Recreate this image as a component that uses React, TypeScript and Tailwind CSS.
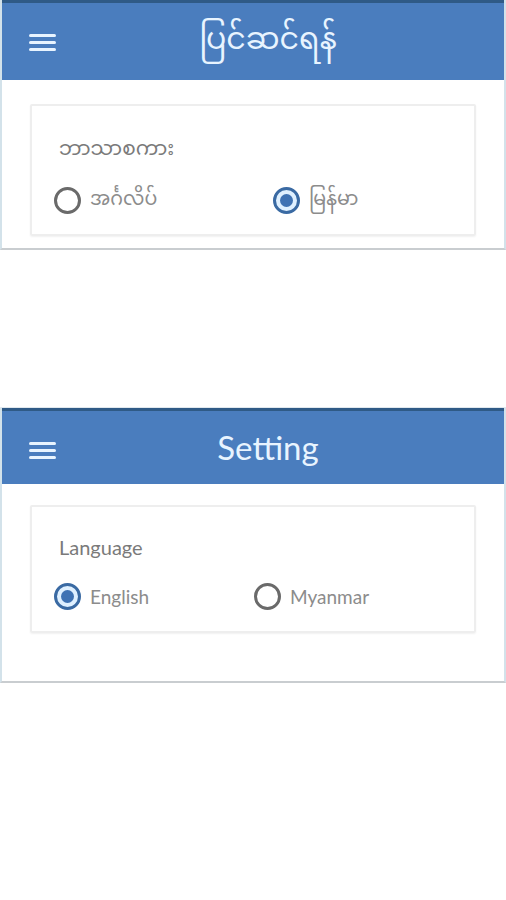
import { useState } from "react";

interface RadioProps {
  checked: boolean;
  label: string;
  onSelect: () => void;
}

function Radio({ checked, label, onSelect }: RadioProps) {
  return (
    <button type="button" onClick={onSelect} className="flex flex-row items-center gap-[9px]">
      {checked ? (
        <span className="flex items-center justify-center w-[27px] h-[27px] rounded-full border-[3px] border-[#3a6aa3] bg-[#dff0ff]">
          <span className="w-[13px] h-[13px] rounded-full bg-[#3f72b3]" />
        </span>
      ) : (
        <span className="w-[27px] h-[27px] rounded-full border-[3px] border-[#6a6a6a] bg-white" />
      )}
      <span className="text-[19px] text-[#8c8c8c] leading-none">{label}</span>
    </button>
  );
}

function Hamburger() {
  return (
    <div className="flex flex-col gap-[4px] w-[27px]">
      <span className="h-[3px] rounded-full bg-[#e8f4ff]" />
      <span className="h-[3px] rounded-full bg-[#e8f4ff]" />
      <span className="h-[3px] rounded-full bg-[#e8f4ff]" />
    </div>
  );
}

interface PanelProps {
  title: string;
  label: string;
  options: string[];
  selected: number;
  secondX: string;
  headerH: string;
  bodyPad: string;
  cardH: string;
  cardPad: string;
  myanmar?: boolean;
}

function SettingPanel({
  title,
  label,
  options,
  selected,
  secondX,
  headerH,
  bodyPad,
  cardH,
  cardPad,
  myanmar,
}: PanelProps) {
  const [value, setValue] = useState(selected);
  const font = myanmar
    ? "font-['Noto_Sans_Myanmar','Padauk','Myanmar_Text','Noto_Sans',sans-serif]"
    : "font-['Lato','Open_Sans',sans-serif]";

  return (
    <div className={`border-x-2 border-b-2 border-x-[#d3e2ea] border-b-[#c9cdd0] bg-white ${font}`}>
      <div className={`relative flex items-center justify-center ${headerH} bg-[#4a7dbe] border-t-[3px] border-[#2f5a86]`}>
        <div className="absolute left-[27px] top-[31px]">
          <Hamburger />
        </div>
        <h1 className={`text-[#e8f4ff] ${myanmar ? "text-[30px]" : "text-[33px]"} leading-none ml-[30px]`}>
          {title}
        </h1>
      </div>
      <div className={`px-[28px] ${bodyPad}`}>
        <div className={`${cardH} ${cardPad} border-2 border-[#eeeeee] rounded-[2px] shadow-[0_1px_2px_rgba(0,0,0,0.06)] pl-[22px]`}>
          <p className="text-[20px] text-[#7a7a7a] leading-none ml-[5px]">{label}</p>
          <div className="flex flex-row mt-[26px]">
            <div className={secondX}>
              <Radio checked={value === 0} label={options[0]} onSelect={() => setValue(0)} />
            </div>
            <Radio checked={value === 1} label={options[1]} onSelect={() => setValue(1)} />
          </div>
        </div>
      </div>
    </div>
  );
}

export default function App() {
  return (
    <div className="w-[506px] h-[900px] bg-white">
      <SettingPanel
        title="ပြင်ဆင်ရန်"
        label="ဘာသာစကား"
        options={["အင်္ဂလိပ်", "မြန်မာ"]}
        selected={1}
        secondX="w-[219px]"
        headerH="h-[80px]"
        bodyPad="pt-[24px] pb-[12px]"
        cardH="h-[132px]"
        cardPad="pt-[35px]"
        myanmar
      />
      <div className="h-[157px]" />
      <div className="border-t border-[#e0e8ee]">
        <SettingPanel
          title="Setting"
          label="Language"
          options={["English", "Myanmar"]}
          selected={0}
          secondX="w-[200px]"
          headerH="h-[76px]"
          bodyPad="pt-[21px] pb-[48px]"
          cardH="h-[128px]"
          cardPad="pt-[30px]"
        />
      </div>
    </div>
  );
}
